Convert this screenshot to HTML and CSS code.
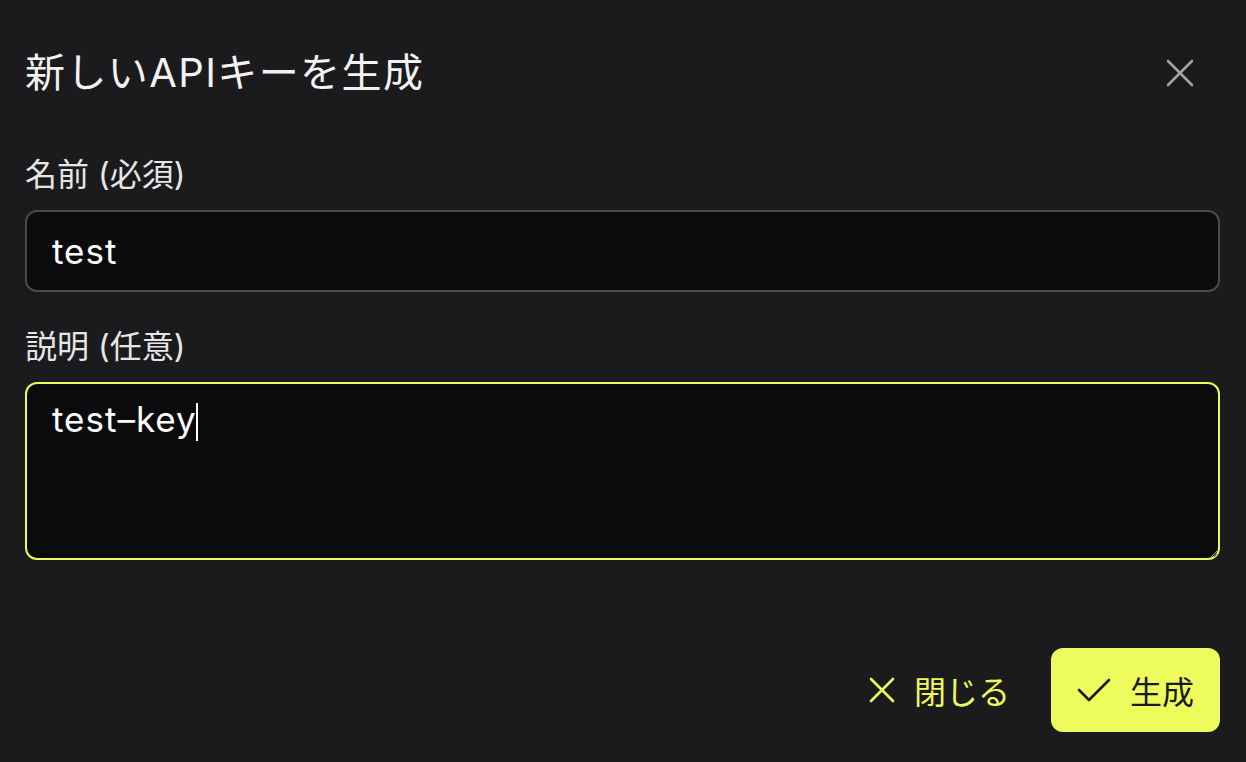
FILE: index.html
```html
<!DOCTYPE html>
<html lang="ja">
<head>
    <meta charset="UTF-8">
    <meta name="viewport" content="width=device-width, initial-scale=1.0">
    <title>新しいAPIキーを生成</title>
    <link rel="stylesheet" href="styles.css">
</head>
<body>
    <div class="dialog">
        <div class="dialog-header">
            <h1>新しいAPIキーを生成</h1>
            <button class="icon-button" aria-label="閉じる">
                <svg width="28" height="28" viewBox="0 0 28 28">
                    <path d="M2 2L26 26M26 2L2 26" stroke="currentColor" stroke-width="2.6" stroke-linecap="round"/>
                </svg>
            </button>
        </div>

        <form class="key-form">
            <label for="keyName">名前 (必須)</label>
            <input type="text" id="keyName" value="test">

            <label for="keyDesc">説明 (任意)</label>
            
            <div class="textarea focused" id="keyDesc" role="textbox" aria-multiline="true">test–key<span class="caret"></span></div>

            <div class="actions">
                <button type="button" class="text-button">
                    <svg width="26" height="26" viewBox="0 0 26 26">
                        <path d="M2 2L24 24M24 2L2 24" stroke="currentColor" stroke-width="2.6" stroke-linecap="round"/>
                    </svg>
                    閉じる
                </button>
                <button type="submit" class="primary-button">
                    <svg width="34" height="26" viewBox="0 0 34 26">
                        <path d="M2 13L12 23L32 3" fill="none" stroke="currentColor" stroke-width="2.6" stroke-linecap="round" stroke-linejoin="round"/>
                    </svg>
                    生成
                </button>
            </div>
        </form>
    </div>
</body>
</html>
```

FILE: styles.css
```css
body {
    margin: 0;
    background-color: #1b1b1d;
    color: #f2f2f2;
    font-family: Inter, "Noto Sans CJK JP", sans-serif;
    color-scheme: dark;
}

.dialog {
    padding: 47px 26px 30px 25px;
}

.dialog-header {
    display: flex;
    align-items: center;
    justify-content: space-between;
}

.dialog-header h1 {
    margin: 0;
    font-size: 40px;
    font-weight: 400;
    letter-spacing: 1.4px;
    line-height: 52px;
}

.icon-button {
    background: none;
    border: none;
    padding: 0;
    margin-right: 26px;
    color: #a3a3a6;
    display: flex;
    cursor: pointer;
}

.key-form {
    display: flex;
    flex-direction: column;
}

.key-form label {
    font-size: 32px;
    line-height: 40px;
    color: #e6e6e6;
    margin-top: 56px;
    margin-bottom: 15px;
}

.key-form label + input + label {
    margin-top: 35px;
}

.key-form input,
.key-form .textarea {
    box-sizing: border-box;
    width: 100%;
    background-color: #0b0b0d;
    color: #ffffff;
    font-family: inherit;
    font-size: 35px;
    letter-spacing: 1px;
    border-radius: 12px;
    outline: none;
    padding: 0 25px;
    margin: 0;
}

.key-form input {
    height: 82px;
    border: 2px solid #4a4a4e;
}

.key-form .textarea {
    height: 178px;
    border: 2px solid #4a4a4e;
    padding-top: 14px;
    line-height: 42px;
    resize: vertical;
    overflow: auto;
}

.key-form .textarea.focused {
    border-color: #eef85c;
}

.caret {
    display: inline-block;
    width: 2px;
    height: 38px;
    margin-left: -1px;
    vertical-align: -9px;
    background-color: #ffffff;
}

.actions {
    display: flex;
    justify-content: flex-end;
    align-items: center;
    gap: 15px;
    margin-top: 88px;
}

.actions button {
    display: flex;
    align-items: center;
    gap: 19px;
    height: 84px;
    border: none;
    border-radius: 12px;
    font-family: inherit;
    font-size: 32px;
    padding: 0 26px;
    cursor: pointer;
}

.text-button {
    background: none;
    color: #eef85c;
}

.primary-button {
    background-color: #eefb5c;
    color: #1b1b1d;
    gap: 16px;
}

.primary-button:hover {
    background-color: #e4f150;
}
```
